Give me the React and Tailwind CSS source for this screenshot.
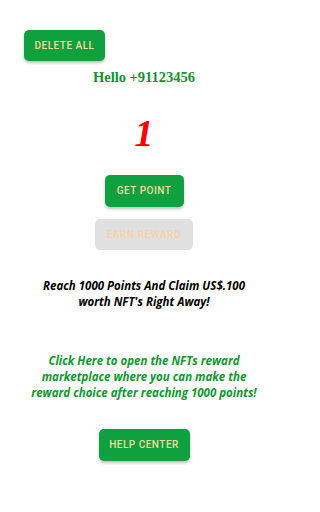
import React from 'react';

const btn = 'rounded-[5px] bg-[#0fa03f] text-[#f3dd9b] shadow-[0_2px_3px_rgba(0,0,0,0.25)] font-medium uppercase tracking-[0.05em] text-[10px] leading-none';

export default function App() {
  return (
    <div className="w-[288px] h-[512px] bg-white flex flex-col items-center" style={{ fontFamily: 'Roboto, sans-serif' }}>
      <div className="w-full pl-6 pt-[30px]">
        <button type="button" className={`${btn} w-[81px] h-[31px]`}>
          Delete All
        </button>
      </div>
      <p className="mt-[6px] text-[14.5px] leading-5 text-[#11962f] font-bold" style={{ fontFamily: '"Liberation Serif", serif' }}>
        Hello +91123456
      </p>
      <p className="mt-[24px] text-[38px] leading-[44px] font-bold italic text-[#f00]" style={{ fontFamily: '"Liberation Serif", serif' }}>
        1
      </p>
      <button type="button" className={`${btn} mt-[20px] w-[79px] h-[32px]`}>
        Get Point
      </button>
      <button type="button" className="mt-[12px] w-[98px] h-[31px] rounded-[5px] bg-[#e0e0e0] text-[#f9d3a6] font-medium uppercase tracking-[0.06em] text-[10px] leading-none" disabled>
        Earn Reward
      </button>
      <p className="mt-[28px] text-center text-[11.5px] leading-4 font-bold italic text-black" style={{ fontFamily: '"Open Sans", sans-serif' }}>
        Reach 1000 Points And Claim US$.100<br />worth NFT's Right Away!
      </p>
      <p className="mt-[43px] text-center text-[11.5px] leading-4 font-bold italic text-[#0e9a2c]" style={{ fontFamily: '"Open Sans", sans-serif' }}>
        Click Here to open the NFTs reward<br />marketplace where you can make the<br />reward choice after reaching 1000 points!
      </p>
      <button type="button" className={`${btn} mt-[28px] w-[91px] h-[32px]`}>
        Help Center
      </button>
    </div>
  );
}
